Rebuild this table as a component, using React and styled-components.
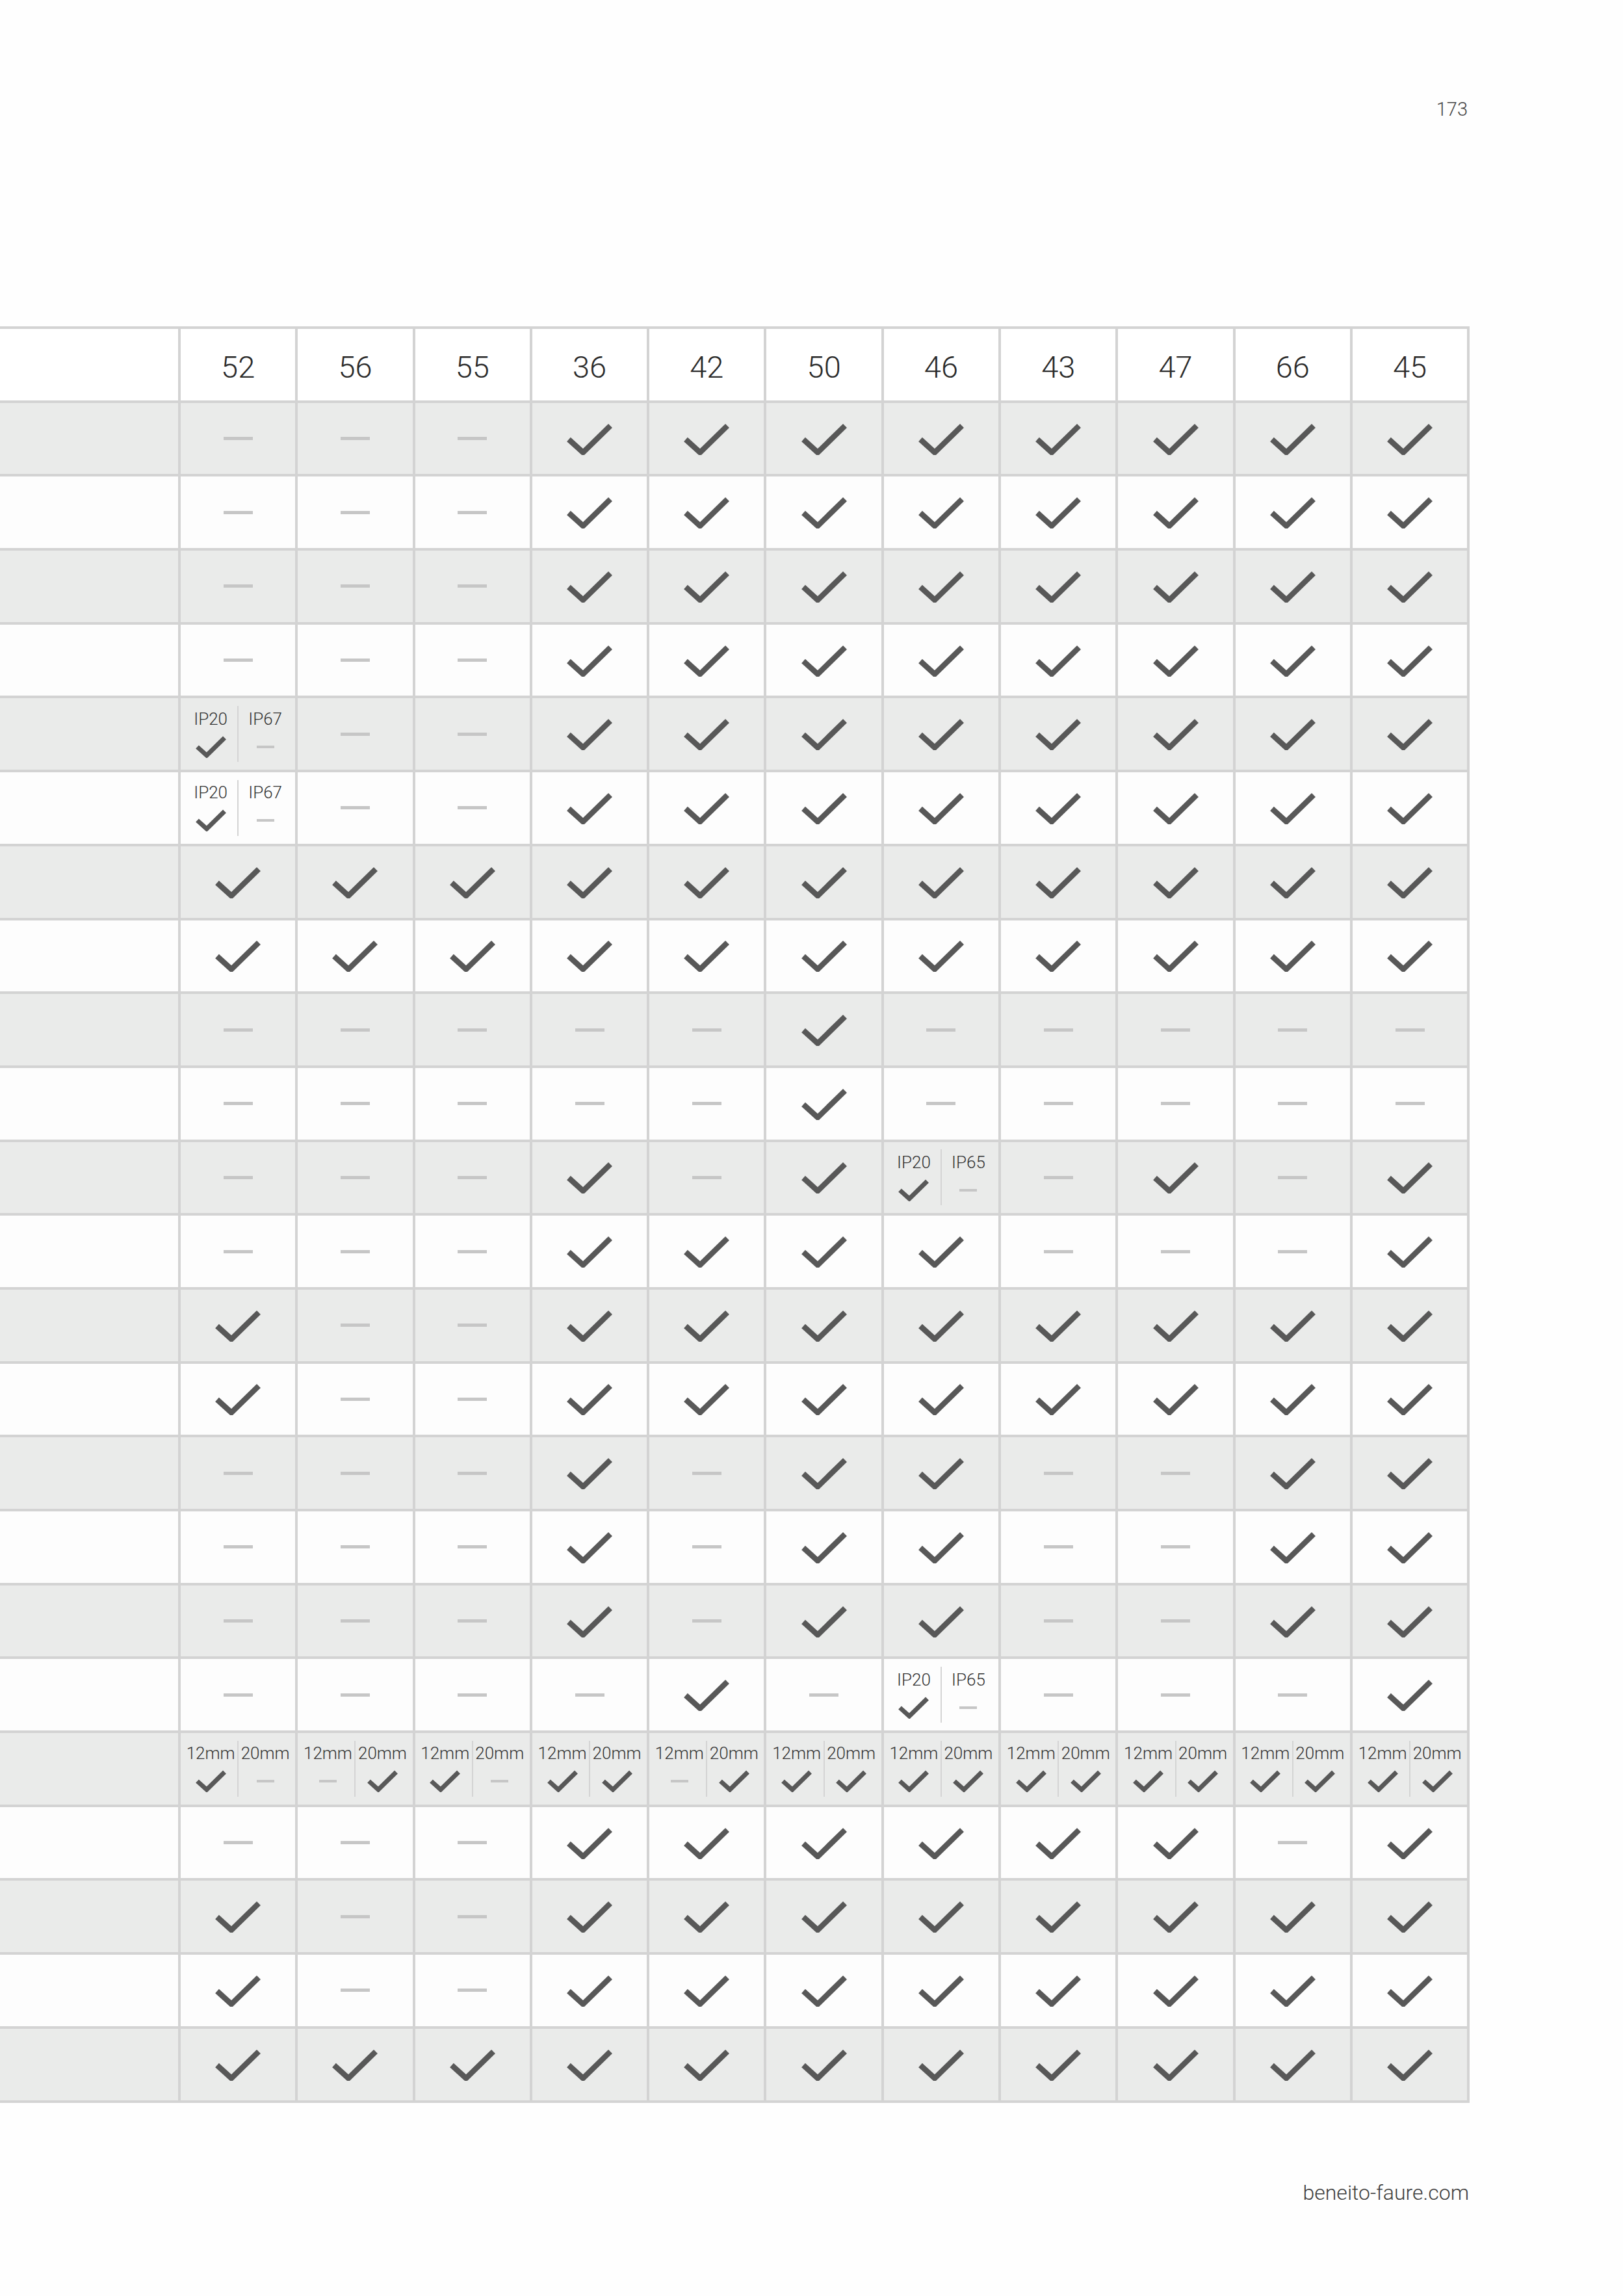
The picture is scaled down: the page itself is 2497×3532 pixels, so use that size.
import React, { Fragment } from 'react';
import styled, { createGlobalStyle } from 'styled-components';

const GlobalStyle = createGlobalStyle`
	body {
		margin: 0;
		background: #fefefe;
		font-family: Roboto, 'Liberation Sans', sans-serif;
	}
`;

const Page = styled.div`
	width: 2497px;
	min-height: 3532px;
	display: flex;
	flex-direction: column;
`;

const PageNumber = styled.div`
	align-self: flex-end;
	margin: 154px 239px 0 0;
	font-size: 29px;
	line-height: 29px;
	font-weight: 300;
	color: #444;
`;

const Table = styled.div`
	align-self: flex-start;
	margin-top: 319px;
	display: grid;
	grid-template-columns: 274px repeat(11, 176.3px);
	grid-auto-rows: 109.7px;
	gap: 4px;
	padding: 4px 4px 4px 0;
	background: #d3d3d3;
`;

const Cell = styled.div`
	display: flex;
	align-items: center;
	justify-content: center;
	background: ${props => (props.$shade ? '#eaebea' : '#fdfdfd')};
`;

const HeadCell = styled(Cell)`
	background: #fff;
	padding-top: 8px;
	box-sizing: border-box;
	font-size: 47px;
	font-weight: 300;
	color: #2b2b2b;
`;

const Dash = styled.span`
	display: block;
	width: ${props => (props.$small ? 27 : 45)}px;
	height: ${props => (props.$small ? 4 : 5)}px;
	background: #c6c6c6;
`;

const Split = styled.div`
	display: flex;
	align-items: center;
`;

const Sub = styled.div`
	width: 82px;
	display: flex;
	flex-direction: column;
	align-items: center;
	gap: 13px;
`;

const SubLabel = styled.span`
	font-size: 26px;
	line-height: 26px;
	font-weight: 300;
	color: #333;
	white-space: nowrap;
`;

const Slot = styled.div`
	height: 34px;
	display: flex;
	align-items: center;
	justify-content: center;
`;

const Divider = styled.span`
	width: 2px;
	height: 86px;
	background: #d4d4d4;
`;

const Footer = styled.div`
	align-self: flex-end;
	margin: 122px 237px 0 0;
	font-size: 32px;
	line-height: 32px;
	font-weight: 300;
	color: #3d3d3d;
`;

const Check = ({ small }) =>
	small ? (
		<svg width="47" height="34" viewBox="0 0 47 34">
			<path d="M2.5 17 L17 30 L44.5 3" fill="none" stroke="#585858" strokeWidth="7" />
		</svg>
	) : (
		<svg width="70" height="50" viewBox="0 0 70 50">
			<path d="M3 26 L25 46 L67 5" fill="none" stroke="#585858" strokeWidth="8.5" />
		</svg>
	);

const Mark = ({ value, small }) => (value === 'C' ? <Check small={small} /> : <Dash $small={small} />);

const columns = ['52', '56', '55', '36', '42', '50', '46', '43', '47', '66', '45'];

const parse = s => s.split('');
const split = (a, va, b, vb) => ({ left: [a, va], right: [b, vb] });

const rows = [
	parse('DDDCCCCCCCC'),
	parse('DDDCCCCCCCC'),
	parse('DDDCCCCCCCC'),
	parse('DDDCCCCCCCC'),
	[split('IP20', 'C', 'IP67', 'D'), ...parse('DDCCCCCCCC')],
	[split('IP20', 'C', 'IP67', 'D'), ...parse('DDCCCCCCCC')],
	parse('CCCCCCCCCCC'),
	parse('CCCCCCCCCCC'),
	parse('DDDDDCDDDDD'),
	parse('DDDDDCDDDDD'),
	[...parse('DDDCDC'), split('IP20', 'C', 'IP65', 'D'), ...parse('DCDC')],
	parse('DDDCCCCDDDC'),
	parse('CDDCCCCCCCC'),
	parse('CDDCCCCCCCC'),
	parse('DDDCDCCDDCC'),
	parse('DDDCDCCDDCC'),
	parse('DDDCDCCDDCC'),
	[...parse('DDDDCD'), split('IP20', 'C', 'IP65', 'D'), ...parse('DDDC')],
	['CD', 'DC', 'CD', 'CC', 'DC', 'CC', 'CC', 'CC', 'CC', 'CC', 'CC'].map(p =>
		split('12mm', p[0], '20mm', p[1])
	),
	parse('DDDCCCCCCDC'),
	parse('CDDCCCCCCCC'),
	parse('CDDCCCCCCCC'),
	parse('CCCCCCCCCCC'),
];

const SplitCell = ({ cell }) => (
	<Split>
		<Sub>
			<SubLabel>{cell.left[0]}</SubLabel>
			<Slot>
				<Mark value={cell.left[1]} small />
			</Slot>
		</Sub>
		<Divider />
		<Sub>
			<SubLabel>{cell.right[0]}</SubLabel>
			<Slot>
				<Mark value={cell.right[1]} small />
			</Slot>
		</Sub>
	</Split>
);

const App = () => (
	<Page>
		<GlobalStyle />
		<PageNumber>173</PageNumber>
		<Table>
			<HeadCell />
			{columns.map(c => (
				<HeadCell key={c}>{c}</HeadCell>
			))}
			{rows.map((row, i) => (
				<Fragment key={i}>
					<Cell $shade={i % 2 === 0} />
					{row.map((cell, j) => (
						<Cell key={j} $shade={i % 2 === 0}>
							{typeof cell === 'string' ? <Mark value={cell} /> : <SplitCell cell={cell} />}
						</Cell>
					))}
				</Fragment>
			))}
		</Table>
		<Footer>beneito-faure.com</Footer>
	</Page>
);

export default App;
